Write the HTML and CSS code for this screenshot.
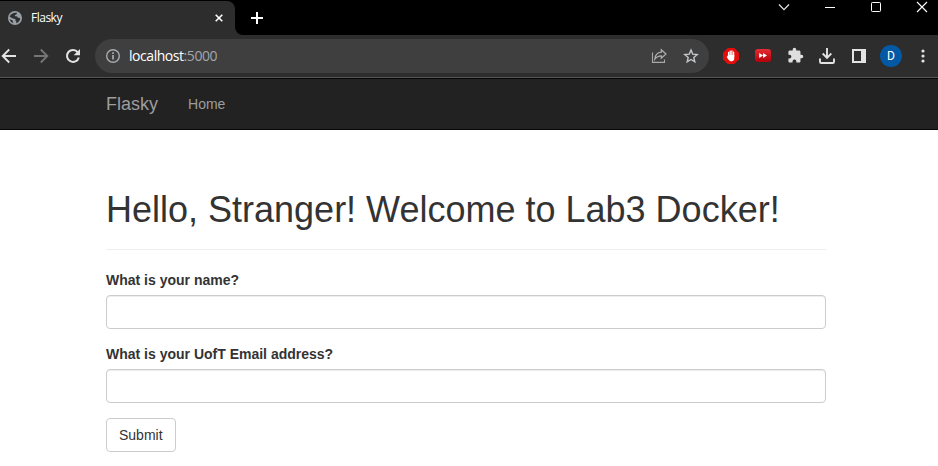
FILE: index.html
```html
<!DOCTYPE html>
<html lang="en">
<head>
<meta charset="utf-8">
<title>Flasky</title>
<link rel="stylesheet" href="styles.css">
</head>
<body>
<div class="browser">
  <div class="tabstrip">
    <div class="tab">
      <svg class="favicon" width="14" height="14" viewBox="0 0 14 14"><circle cx="7" cy="7" r="7" fill="#9aa0a6"/><path d="M6.600 1.800 9 1.700 8.400 3.400 6.800 4 7 5.200 9.300 5.400 9.800 6.800 12 7 12.200 8.600 10.300 11.300 8.100 12.300 8.400 10.400 7.300 9.400 7.500 8.100 5 7.400 3 6.400 1.700 5.800 2.600 3.800 4.600 2.400zM1.500 8.200 4.400 9.200 5.400 12.200 3.100 11.100z" fill="#2d2e30"/></svg>
      <span class="tab-title">Flasky</span>
      <svg class="tab-close" width="8" height="8" viewBox="0 0 8 8"><path d="M.7.7 7.300 7.300M7.300.7.7 7.300" stroke="#fff" stroke-width="1.600"/></svg>
    </div>
    <svg class="tab-foot" width="8" height="8" viewBox="0 0 8 8"><path d="M0 0a8 8 0 0 0 8 8H0z" fill="#2d2d2d"/></svg>
    <svg class="new-tab" width="12" height="12" viewBox="0 0 12 12"><path d="M6 0v12M0 6h12" stroke="#fff" stroke-width="2"/></svg>
    <div class="window-controls">
      <svg width="12" height="12" viewBox="0 0 12 12"><path d="M1 3.500 6 8.700 11 3.500" fill="none" stroke="#e8e8e8" stroke-width="1.200"/></svg>
      <svg width="12" height="12" viewBox="0 0 12 12"><path d="M1 6.500h10" stroke="#fff"/></svg>
      <svg width="12" height="12" viewBox="0 0 12 12"><rect x="1.500" y="1.500" width="9" height="9" rx=".8" fill="none" stroke="#fff"/></svg>
      <svg width="12" height="12" viewBox="0 0 12 12"><path d="m1 1 10 10M11 1 1 11" stroke="#fff" stroke-width="1.100"/></svg>
    </div>
  </div>
  <div class="toolbar">
    <div class="cell"><svg width="16" height="16" viewBox="0 0 16 16"><path d="M15 8H2M8.200 1.500 1.700 8l6.500 6.500" fill="none" stroke="#e3e3e3" stroke-width="1.900"/></svg></div>
    <div class="cell"><svg width="16" height="16" viewBox="0 0 16 16"><path d="M1 8h13M7.800 1.500 14.300 8l-6.500 6.500" fill="none" stroke="#757575" stroke-width="1.900"/></svg></div>
    <div class="cell"><svg width="16" height="16" viewBox="0 0 16 16"><path d="M12.800 4.300A6 6 0 1 0 13.800 9.400" fill="none" stroke="#e3e3e3" stroke-width="2"/><path d="M15 1v6.300H8.700z" fill="#e3e3e3"/></svg></div>
    <div class="omnibox">
      <svg width="14" height="14" viewBox="0 0 14 14"><circle cx="7" cy="7" r="6.300" fill="none" stroke="#a8abae" stroke-width="1.400"/><path d="M7 6v4.600M7 3.300v1.600" stroke="#a8abae" stroke-width="1.700"/></svg>
      <span class="url">localhost<span class="port">:5000</span></span>
      <svg class="share" width="16" height="16" viewBox="0 0 16 16"><path d="M1.500 4.500v9.900h12v-2.900" fill="none" stroke="#a8a8a8" stroke-width="1.100"/><path d="M10.300 1.800 15 6l-4.700 4.200V7.900C7.500 7.900 5.500 8.800 3.800 11.200 4.200 7.200 6.600 4.500 10.300 4.200z" fill="none" stroke="#b0b0b0" stroke-width="1.200"/></svg>
      <svg width="16" height="16" viewBox="0 0 16 16"><path d="m8 2 1.700 4.100 4.500.4-3.400 2.900 1 4.400L8 11.500l-3.800 2.300 1-4.400-3.400-2.900 4.500-.4z" fill="none" stroke="#c4c7c9" stroke-width="1.400"/></svg>
    </div>
    <div class="cell"><svg width="16" height="16" viewBox="0 0 16 16"><path d="M4.700 0h6.600L16 4.700v6.600L11.300 16H4.700L0 11.300V4.700z" fill="#e40d0d"/><path d="M5.600 8.500V4.400M7.200 7.500V3.200M8.900 7.500V3M10.600 8.500V4.200" stroke="#fff" stroke-width="1.300" stroke-linecap="round"/><path d="M5 7h6.250v3.500c0 1.700-1 2.800-2.700 2.800-1.500 0-2.400-.6-3.200-1.800L3.600 8.800l.9-.5z" fill="#fff"/></svg></div>
    <div class="cell"><svg width="16" height="13" viewBox="0 0 16 13"><defs><linearGradient id="red" x2="0" y2="1"><stop stop-color="#e52d34"/><stop offset="1" stop-color="#b30009"/></linearGradient></defs><rect width="16" height="13" rx="3" fill="url(#red)"/><path d="m4.200 3.900 3.800 2.600-3.800 2.600zm3.800 0 4 2.600-4 2.600z" fill="#fff"/></svg></div>
    <div class="cell"><svg width="17" height="17" viewBox="0 0 24 24"><path fill="#dedede" d="M20.500 11H19V7c0-1.100-.9-2-2-2h-4V3.500a2.500 2.500 0 0 0-5 0V5H4c-1.100 0-2 .9-2 2v3.800h1.500a2.700 2.700 0 0 1 0 5.400H2V20c0 1.100.9 2 2 2h3.800v-1.500a2.700 2.700 0 0 1 5.400 0V22H17c1.100 0 2-.9 2-2v-4h1.500a2.500 2.500 0 0 0 0-5z"/></svg></div>
    <div class="cell"><svg width="16" height="16" viewBox="0 0 16 16"><path d="M8 0v9.500M3.700 5.500 8 9.800l4.300-4.300M1 10.500v3.200q0 1.300 1.300 1.300h11.400q1.300 0 1.300-1.300v-3.200" fill="none" stroke="#e3e3e3" stroke-width="1.900"/></svg></div>
    <div class="cell"><svg width="14" height="14" viewBox="0 0 14 14"><path d="M0 0h14v14H0zM2 2v10h7V2z" fill="#e3e3e3" fill-rule="evenodd"/></svg></div>
    <div class="cell"><span class="avatar">D</span></div>
    <div class="cell"><svg width="4" height="14" viewBox="0 0 4 14"><g fill="#e3e3e3"><circle cx="2" cy="2" r="1.600"/><circle cx="2" cy="7" r="1.600"/><circle cx="2" cy="12" r="1.600"/></g></svg></div>
  </div>
</div>
<nav class="navbar">
  <a class="brand">Flasky</a>
  <a class="nav-link">Home</a>
</nav>
<main class="container">
  <div class="page-header"><h1>Hello, Stranger! Welcome to Lab3 Docker!</h1></div>
  <form>
    <div class="form-group">
      <label for="name">What is your name?</label>
      <input class="form-control" id="name" type="text">
    </div>
    <div class="form-group">
      <label for="email">What is your UofT Email address?</label>
      <input class="form-control" id="email" type="text">
    </div>
    <button class="btn" type="button">Submit</button>
  </form>
</main>
</body>
</html>
```
FILE: styles.css
```css
* { box-sizing: border-box; }
html { overflow: hidden; }
body {
  margin: 0;
  background: #fff;
  color: #333;
  font: 14px/20px "Liberation Sans", Arial, sans-serif;
  overflow: hidden;
}
svg { display: block; flex: none; }

.browser { font-family: "Open Sans", "Noto Sans", sans-serif; overflow: hidden; }
.tabstrip { display: flex; height: 35px; background: #000; padding-top: 1px; }
.tab {
  display: flex;
  align-items: center;
  width: 235px;
  height: 34px;
  padding: 0 12px 0 8px;
  background: #2d2d2d;
  border-radius: 0 8px 0 0;
  color: #fff;
}
.tab-title { margin-left: 9px; font-size: 12px; letter-spacing: -0.5px; }
.tab-close { margin-left: auto; }
.tab-foot { align-self: flex-end; }
.new-tab { margin: 11px 0 0 8px; }
.window-controls { display: flex; gap: 34px; margin: 0 10px 0 auto; }

.toolbar {
  display: flex;
  align-items: center;
  height: 43px;
  margin: 0 -1px 0 0;
  padding-bottom: 1px;
  background: #2d2d2d;
  border-bottom: 1px solid #555;
}
.cell { display: flex; flex: none; align-items: center; justify-content: center; width: 32px; }
.cell:first-child { width: 25px; padding-right: 7px; }
.omnibox {
  display: flex;
  flex: 1;
  align-items: center;
  height: 34px;
  margin: 0 6px;
  padding: 0 10px 0 11px;
  border-radius: 17px;
  background: #3f3f3f;
}
.url { margin-left: 9px; color: #fff; font-size: 14px; letter-spacing: -0.45px; }
.port { color: #a3a6a9; }
.share { margin: 0 16px 0 auto; }
.avatar {
  width: 22px;
  height: 22px;
  border-radius: 50%;
  background: #0459a4;
  color: #fff;
  font: 12px/22px Roboto, sans-serif;
  text-align: center;
}

.navbar {
  display: flex;
  align-items: center;
  gap: 30px;
  height: 52px;
  padding-left: 106px;
  background: #222;
  border: solid #080808;
  border-width: 1px 0;
  color: #9d9d9d;
}
.brand { font-size: 18px; }

.container { width: 826px; padding: 60px 0 0 106px; }
.page-header { margin-bottom: 20px; padding-bottom: 9px; border-bottom: 1px solid #eee; }
h1 { margin: 0 0 10px; font-size: 36px; font-weight: 400; line-height: 1.1; }
.form-group { margin-bottom: 15px; }
label { display: block; margin-bottom: 5px; font-weight: 700; }
.form-control {
  display: block;
  width: 100%;
  height: 34px;
  padding: 6px 12px;
  border: 1px solid #ccc;
  border-radius: 4px;
  background: #fff;
  box-shadow: inset 0 1px 1px rgba(0, 0, 0, .075);
}
.btn {
  display: block;
  height: 34px;
  padding: 6px 12px;
  border: 1px solid #ccc;
  border-radius: 4px;
  background: #fff;
  color: #333;
  font: inherit;
}
```
